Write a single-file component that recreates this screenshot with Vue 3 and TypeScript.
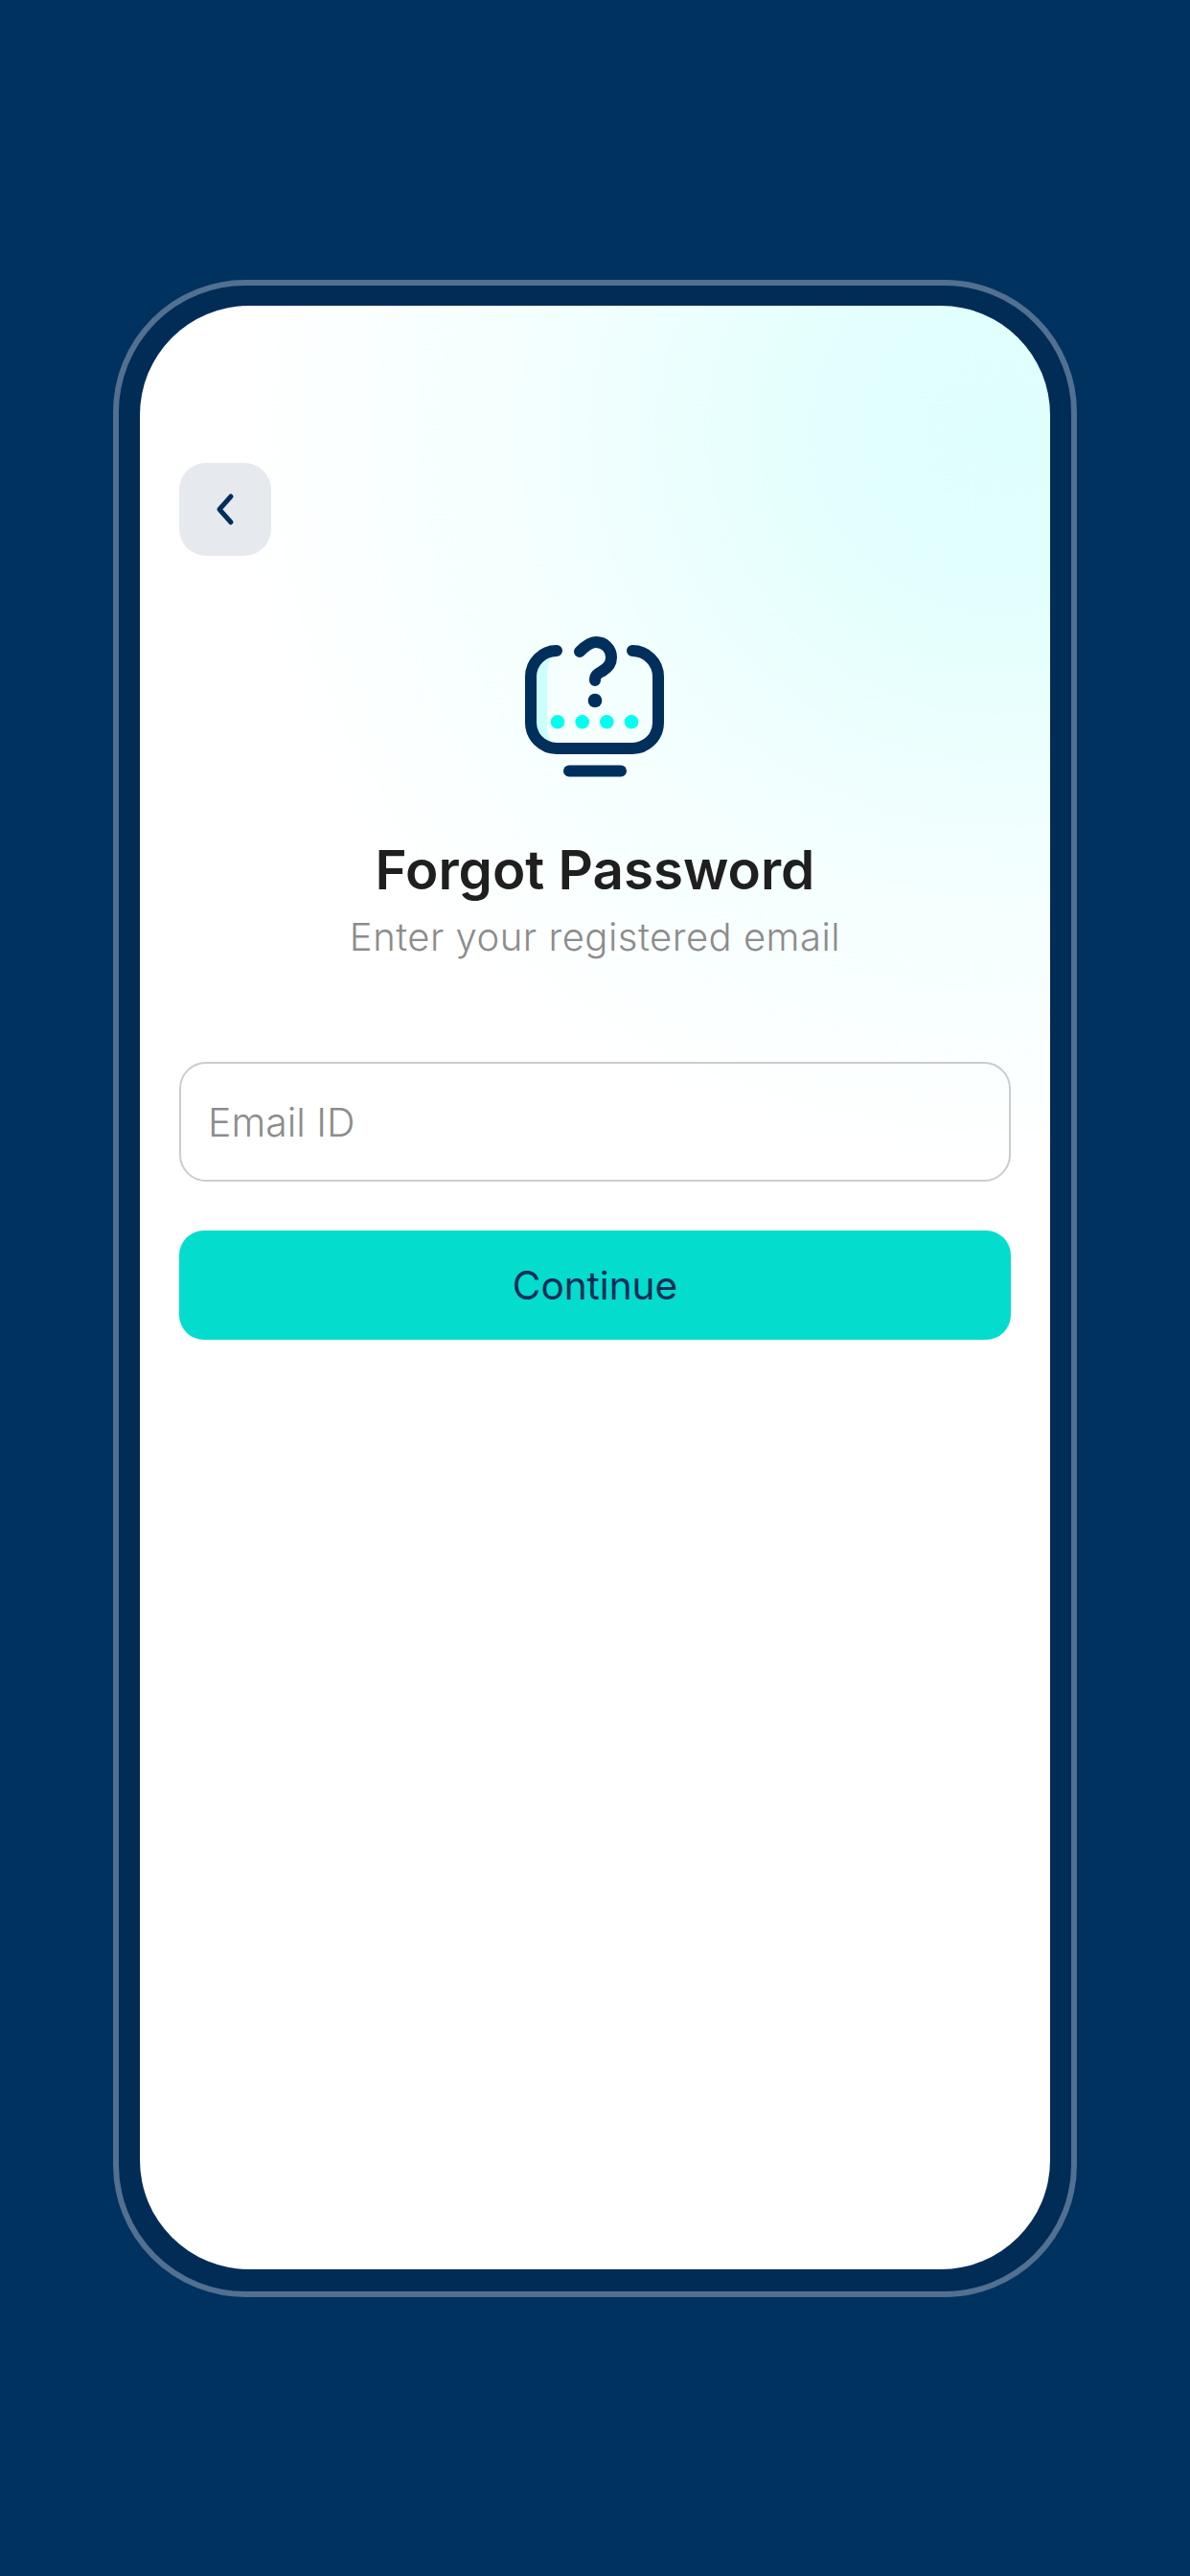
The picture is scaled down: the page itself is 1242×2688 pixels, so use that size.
<script setup lang="ts">
const dots: number[] = [41, 66.7, 92.3, 118];
</script>

<template>
  <main class="page">
    <section class="frame">
      <div class="screen">
        <button class="back" type="button" aria-label="Back">
          <svg width="28" height="40" viewBox="0 0 28 40" fill="none">
            <path d="M20 6 L8 19.5 L20 33" stroke="#012f5c" stroke-width="5" stroke-linecap="round" stroke-linejoin="round" />
          </svg>
        </button>

        <svg class="icon" width="160" height="160" viewBox="0 0 160 160" fill="none">
          <path d="M40 24 A27 27 0 0 0 13 51 V99 A27 27 0 0 0 40 126 C34 120 30 112 30 102 V48 C30 38 34 30 40 24Z" fill="#ccfffb" />
          <path d="M40 24 A27 27 0 0 0 13 51 V99 A27 27 0 0 0 40 126 H119 A27 27 0 0 0 146 99 V51 A27 27 0 0 0 119 24" stroke="#012f5c" stroke-width="12" stroke-linecap="round" />
          <path d="M64 25 C70 19 75 15 81 15 C90 15 97 22 97 31 C97 38 93 42 88 45 C83 48 80 49 80 55" stroke="#012f5c" stroke-width="12" stroke-linecap="round" />
          <circle cx="80" cy="76" r="7.3" fill="#012f5c" />
          <circle v-for="x in dots" :key="x" :cx="x" cy="98.3" r="7.3" fill="#00ffee" />
          <path d="M53 149.5 H107" stroke="#012f5c" stroke-width="12" stroke-linecap="round" />
        </svg>

        <h1 class="title">Forgot Password</h1>
        <p class="subtitle">Enter your registered email</p>

        <form class="form" @submit.prevent>
          <label class="field"><span>Email ID</span></label>
          <button class="submit" type="submit">Continue</button>
        </form>
      </div>
    </section>
  </main>
</template>

<style>
html, body { margin: 0; background: #00325f; }
</style>

<style scoped>
.page {
  box-sizing: border-box;
  height: 2688px;
  padding-top: 292px;
  background: #00325f;
  display: flex;
  justify-content: center;
  align-items: flex-start;
  font-family: Inter, "Liberation Sans", sans-serif;
}
.frame {
  box-sizing: border-box;
  width: 1006px;
  height: 2105px;
  padding: 21px 22px 23px;
  border: 6px solid #527090;
  border-radius: 138px;
  background: #012c56;
}
.screen {
  box-sizing: border-box;
  height: 100%;
  padding: 164px 41px 0;
  border-radius: 114px;
  display: flex;
  flex-direction: column;
  align-items: center;
  background:
    radial-gradient(ellipse 800px 770px at 900px 130px, #dffffc 0%, #e2fffd 22%, #f1fffe 55%, #ffffff 100%);
  background-color: #fff;
}
.back {
  align-self: flex-start;
  width: 96px;
  height: 97px;
  padding: 0;
  border: 0;
  border-radius: 28px;
  background: #e6eaef;
  display: flex;
  align-items: center;
  justify-content: center;
}
.icon {
  display: block;
  margin-top: 75px;
}
.title {
  margin: 60px 0 0;
  font-size: 56.5px;
  line-height: 66px;
  font-weight: 600;
  color: #1f1f1f;
  white-space: nowrap;
}
.subtitle {
  margin: 12px 0 0;
  font-size: 40px;
  letter-spacing: 0.5px;
  line-height: 50px;
  font-weight: 300;
  color: #8c8c8c;
  white-space: nowrap;
}
.form {
  align-self: stretch;
  margin-top: 105px;
  display: flex;
  flex-direction: column;
  gap: 51px;
}
.field {
  box-sizing: border-box;
  height: 125px;
  padding: 0 28px;
  border: 2.5px solid #cccccc;
  border-radius: 28px;
  display: flex;
  align-items: center;
  font-size: 41px;
  font-weight: 300;
  color: #8c8c8c;
}
.submit {
  height: 114px;
  padding: 0;
  border: 0;
  border-radius: 26px;
  background: #04dccd;
  color: #012c56;
  font-family: inherit;
  font-size: 40.5px;
  font-weight: 400;
}
</style>
